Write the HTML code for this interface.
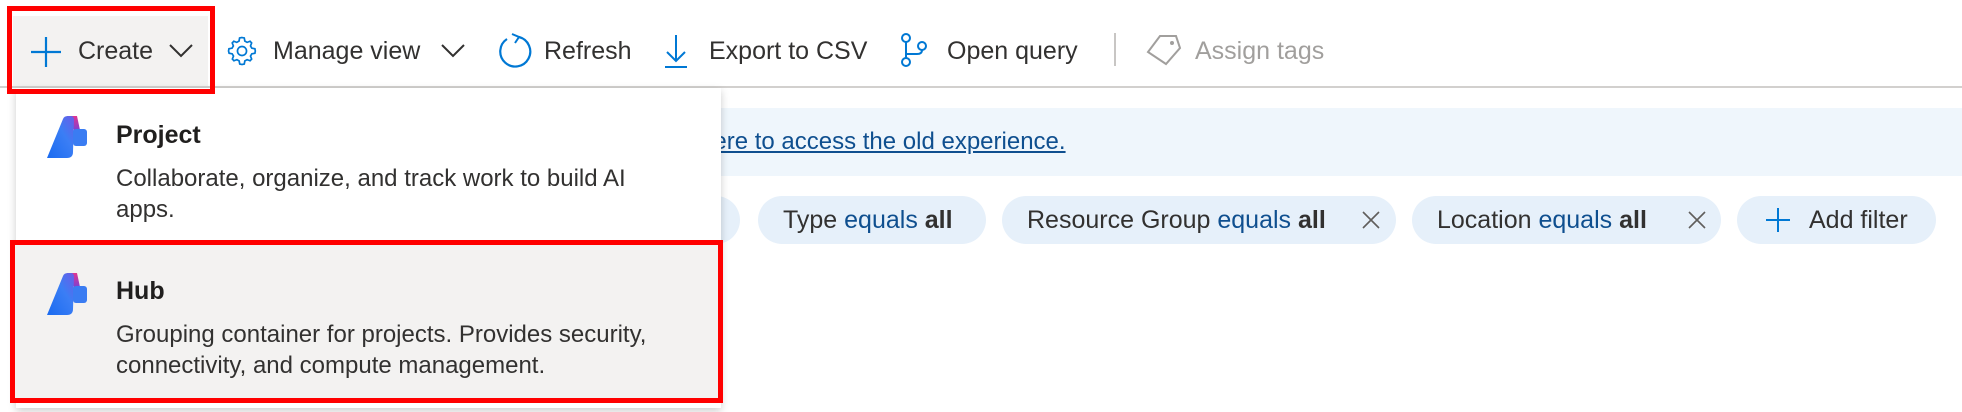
<!DOCTYPE html>
<html><head><meta charset="utf-8"><style>
body{margin:0;width:1962px;height:412px;background:#fff;position:relative;overflow:hidden;font-family:"Liberation Sans",sans-serif;color:#323130}
.a{position:absolute;white-space:nowrap}
.tb{font-size:25px;top:36px;line-height:30px}
.pill{position:absolute;top:196px;height:48px;border-radius:24px;background:#e6f0fa;font-size:25px;line-height:48px;box-sizing:border-box;padding-left:25px;white-space:nowrap}
.pill b{color:#323130}.pill .e{color:#0f4f8f}
</style></head><body>
<!-- toolbar -->
<div class="a" style="left:13px;top:16px;width:195px;height:72px;background:#f3f2f1"></div>
<svg class="a" style="left:30px;top:36px" width="32" height="32"><path d="M16 1V31M1 16H31" stroke="#0078d4" stroke-width="2.2"/></svg>
<div class="a tb" style="left:78px">Create</div>
<svg class="a" style="left:168px;top:43px" width="26" height="16"><path d="M2 2L13 13L24 2" stroke="#323130" stroke-width="2" fill="none"/></svg>
<svg class="a" style="left:225px;top:34px" width="34" height="34" viewBox="0 0 24 24"><path fill="none" stroke="#0078d4" stroke-width="1.2" d="M12 2.5l1.6.3.4 2.2 1.6.9 2.1-.8 1.1 1.2-.8 2.1.9 1.6 2.2.4.3 1.6-.3 1.6-2.2.4-.9 1.6.8 2.1-1.1 1.2-2.1-.8-1.6.9-.4 2.2-1.6.3-1.6-.3-.4-2.2-1.6-.9-2.1.8-1.1-1.2.8-2.1-.9-1.6-2.2-.4L2.5 12l.3-1.6 2.2-.4.9-1.6-.8-2.1 1.1-1.2 2.1.8 1.6-.9.4-2.2z"/><circle cx="12" cy="12" r="3.2" fill="none" stroke="#0078d4" stroke-width="1.2"/></svg>
<div class="a tb" style="left:273px">Manage view</div>
<svg class="a" style="left:440px;top:43px" width="26" height="16"><path d="M2 2L13 13L24 2" stroke="#323130" stroke-width="2" fill="none"/></svg>
<svg class="a" style="left:495px;top:32px" width="38" height="38"><path d="M12 7A15 15 0 1 0 24 5" stroke="#0078d4" stroke-width="2.2" fill="none"/><path d="M17 2L24 5L20 11" stroke="#0078d4" stroke-width="2" fill="none"/></svg>
<div class="a tb" style="left:544px">Refresh</div>
<svg class="a" style="left:663px;top:33px" width="26" height="36"><path d="M13 2V28M4 19L13 28L22 19M2 34H24" stroke="#0078d4" stroke-width="2" fill="none"/></svg>
<div class="a tb" style="left:709px">Export to CSV</div>
<svg class="a" style="left:899px;top:32px" width="30" height="36"><circle cx="7" cy="6" r="4" fill="none" stroke="#0078d4" stroke-width="2"/><circle cx="7" cy="30" r="4" fill="none" stroke="#0078d4" stroke-width="2"/><circle cx="23" cy="14" r="4" fill="none" stroke="#0078d4" stroke-width="2"/><path d="M7 10V26M7 22H18Q23 22 23 18" stroke="#0078d4" stroke-width="2" fill="none"/></svg>
<div class="a tb" style="left:947px">Open query</div>
<div class="a" style="left:1114px;top:33px;width:2px;height:33px;background:#c8c6c4"></div>
<svg class="a" style="left:1146px;top:34px" width="36" height="32"><path d="M14 2H30L34 14L20 30L2 18Z" fill="none" stroke="#a19f9d" stroke-width="2"/><circle cx="26" cy="9" r="2" fill="#a19f9d"/></svg>
<div class="a tb" style="left:1195px;color:#a19f9d">Assign tags</div>
<div class="a" style="left:0;top:86px;width:1962px;height:2px;background:#d2d0ce"></div>
<!-- banner -->
<div class="a" style="left:700px;top:108px;width:1262px;height:68px;background:#eff6fc"></div>
<div class="a" style="left:700px;top:128px;font-size:24px;color:#0f4f8f;text-decoration:underline">here to access the old experience.</div>
<!-- pills -->
<div class="pill" style="left:600px;width:140px"></div>
<div class="pill" style="left:758px;width:228px">Type <span class="e">equals</span> <b>all</b></div>
<div class="pill" style="left:1002px;width:394px">Resource Group <span class="e">equals</span> <b>all</b><svg style="position:absolute;left:360px;top:15px" width="18" height="18"><path d="M1 1L17 17M17 1L1 17" stroke="#605e5c" stroke-width="1.6"/></svg></div>
<div class="pill" style="left:1412px;width:309px">Location <span class="e">equals</span> <b>all</b><svg style="position:absolute;left:276px;top:15px" width="18" height="18"><path d="M1 1L17 17M17 1L1 17" stroke="#605e5c" stroke-width="1.6"/></svg></div>
<div class="pill" style="left:1737px;width:199px;padding-left:72px">Add filter<svg style="position:absolute;left:28px;top:11px" width="26" height="26"><path d="M13 1V25M1 13H25" stroke="#0078d4" stroke-width="2"/></svg></div>
<!-- dropdown -->
<div class="a" style="left:16px;top:88px;width:705px;height:320px;background:#fff;box-shadow:0 3px 8px rgba(0,0,0,.2)"></div>
<div class="a" style="left:15px;top:245px;width:708px;height:153px;background:#f3f2f1"></div>
<div class="a" style="left:10px;top:240px;width:703px;height:153px;border:5px solid #f00"></div>
<div class="a" style="left:7px;top:6px;width:198px;height:78px;border:5px solid #f00"></div>
<svg width="0" height="0" style="position:absolute"><defs><linearGradient id="g" x1="0" y1="1" x2="1" y2="0"><stop offset="0" stop-color="#1a6bf0"/><stop offset=".6" stop-color="#3b7ef5"/><stop offset="1" stop-color="#6b5ce6"/></linearGradient><linearGradient id="p" x1="0" y1="0" x2="0" y2="1"><stop offset="0" stop-color="#e0358f"/><stop offset="1" stop-color="#8040d0"/></linearGradient></defs></svg>
<svg class="a" style="left:47px;top:116px" width="40" height="44"><path d="M20 0H30L33 14H27Z" fill="url(#p)"/><path d="M16 3Q17 0 21 0H24Q27 0 27 4L26 36Q26 42 20 42H0Z" fill="url(#g)"/><rect x="26" y="13" width="14" height="17" rx="3" fill="#3a7cf2"/></svg>
<div class="a" style="left:116px;top:121px;font-size:25px;font-weight:bold;color:#201f1e">Project</div>
<div class="a" style="left:116px;top:163px;font-size:24px;line-height:31px;color:#323130">Collaborate, organize, and track work to build AI<br>apps.</div>
<svg class="a" style="left:47px;top:273px" width="40" height="44"><path d="M20 0H30L33 14H27Z" fill="url(#p)"/><path d="M16 3Q17 0 21 0H24Q27 0 27 4L26 36Q26 42 20 42H0Z" fill="url(#g)"/><rect x="26" y="13" width="14" height="17" rx="3" fill="#3a7cf2"/></svg>
<div class="a" style="left:116px;top:277px;font-size:25px;font-weight:bold;color:#201f1e">Hub</div>
<div class="a" style="left:116px;top:319px;font-size:24px;line-height:31px;color:#323130">Grouping container for projects. Provides security,<br>connectivity, and compute management.</div>
</body></html>
